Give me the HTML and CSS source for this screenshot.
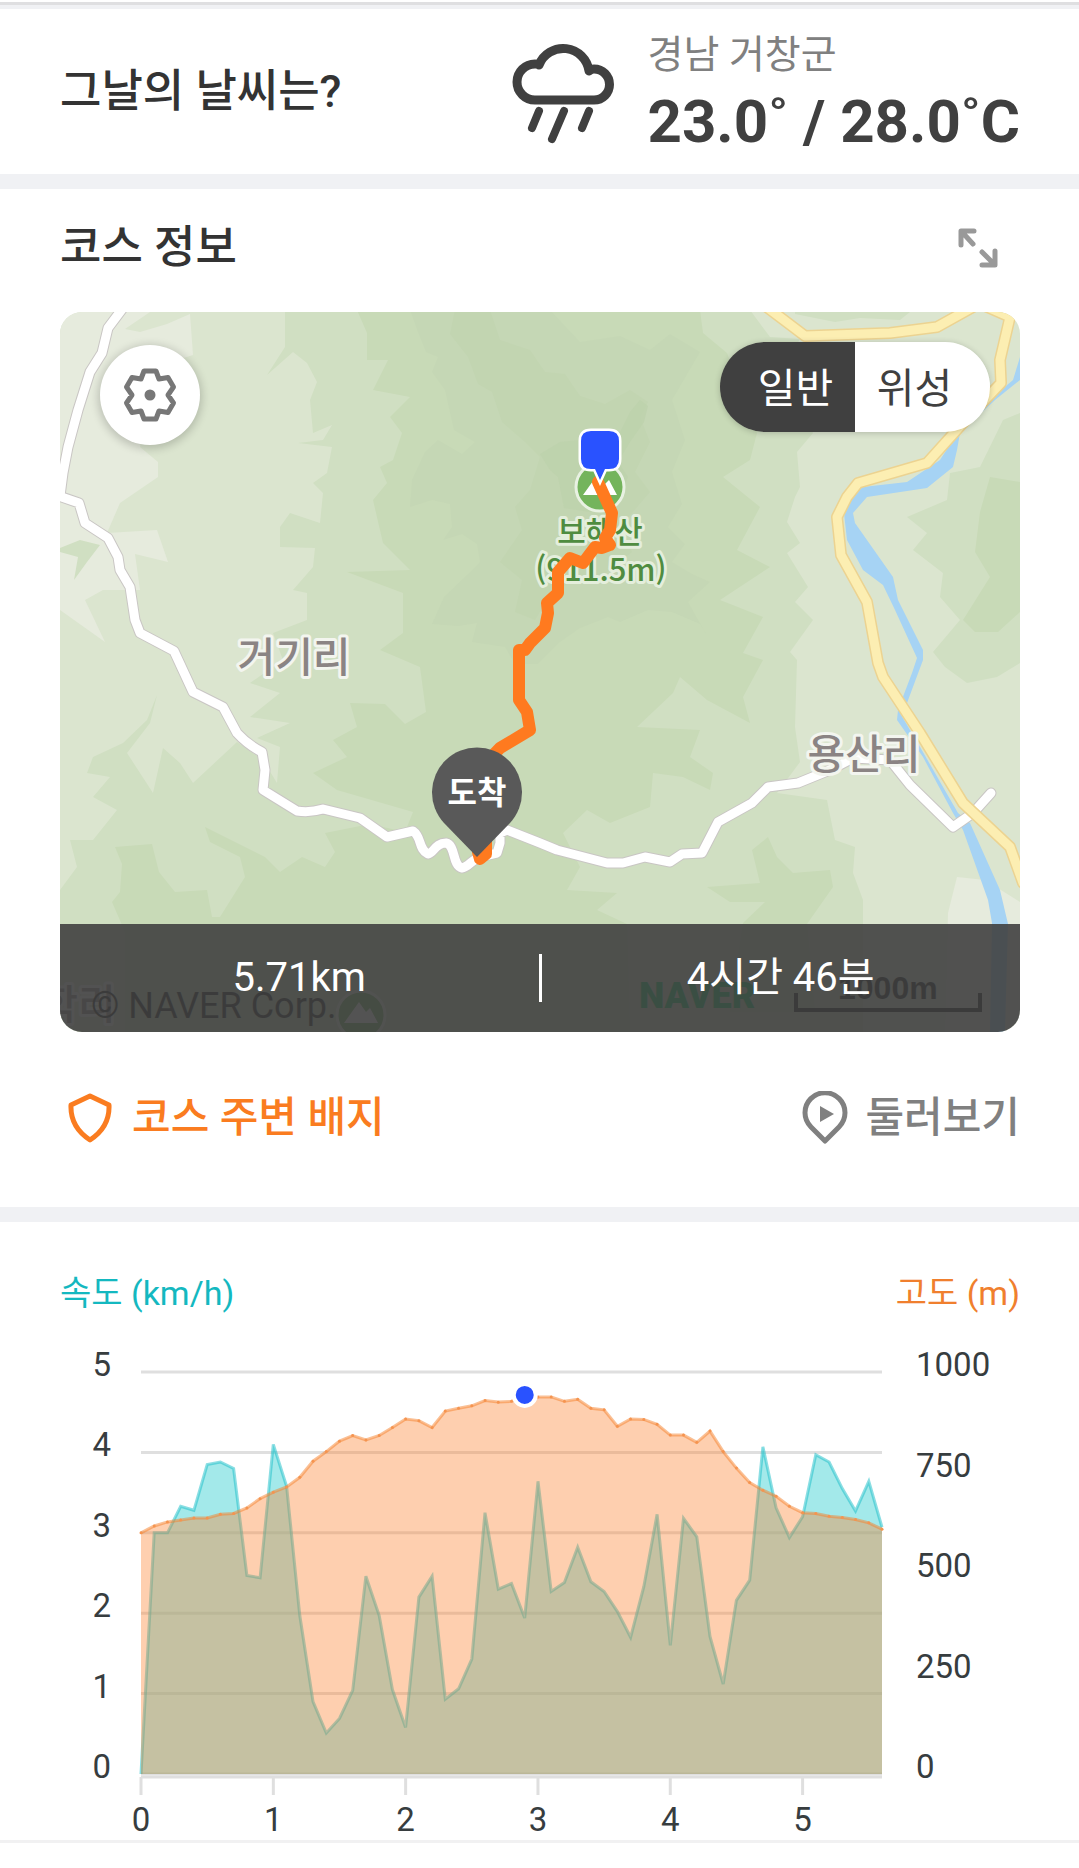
FILE: index.html
```html
<!DOCTYPE html>
<html lang="ko">
<head>
    <meta charset="UTF-8">
    <meta name="viewport" content="width=device-width, initial-scale=1">
    <title>코스 정보</title>
    <link rel="stylesheet" href="styles.css">
</head>
<body>
    <div class="top-line"></div>

    <section class="weather">
        <h2>그날의 날씨는?</h2>
        <svg class="weather-icon" viewBox="0 0 102 104" aria-hidden="true">
            <path class="cloud" d="M23 60 A18 18 0 0 1 23 24 Q26 24 27 25 A26 26 0 0 1 77 31 Q79 29 82 29 A15 15 0 0 1 82 60 Z"/>
            <path class="rain" d="M27 71 L20 88 M52 71 L40 99 M77 71 L70 88"/>
        </svg>
        <div class="weather-info">
            <p class="region">경남 거창군</p>
            <p class="temp">23.0˚ / 28.0˚C</p>
        </div>
    </section>

    <section class="course">
        <div class="course-header">
            <h2>코스 정보</h2>
            <button type="button" class="expand-btn" aria-label="지도 확대">
                <svg viewBox="0 0 40 40">
                    <path d="M3 17 V3 H16 M4 4 L15 16 M37 23 V37 H24 M36 36 L24 24"/>
                </svg>
            </button>
        </div>

        <div class="map">
            <svg class="map-canvas" viewBox="0 0 960 720">
                <!-- terrain -->
                <rect width="960" height="720" fill="#dbe5cf"/>
                <path fill="#e6ebdd" d="M0 0H90L65 17L80 20L107 12L130 2L133 43L95 55L80 135L98 150L98 165L60 191L47 221L97 218L108 250L75 242L80 278L43 278L25 288L45 330L0 298Z"/>
                <path fill="#e6ebdd" d="M897 565L925 568L960 590V720H885L888 601Z"/>
                <path fill="#d0dfc2" d="M225 -2V35L207 63L233 40L247 51L257 70L250 88L253 121L272 113L263 128L238 131L272 135L267 161L253 171L263 181L260 211L230 201L220 215V235L255 236L253 255L233 278L247 281V308L213 321L223 348L190 371L220 381L190 405L230 411L197 426L220 435L217 471L203 448L177 430L133 471L120 451L103 436L93 481L67 441L90 411L97 383L87 408L63 431L33 445L27 461L50 465L33 485L57 498L33 528L10 528L17 555L0 578V720H803V588L793 561L795 535L775 528L767 488L717 481L740 450L735 415L737 348L730 340L753 308L735 290L748 275L727 241L740 231L727 210L735 185L740 175L737 140L753 121L720 60L740 27L710 25L690 -2Z"/>
                <path fill="#d0dfc2" d="M960 101L943 108L920 155L890 161L887 188L847 205L867 221L853 238L883 261L880 285L900 308L873 340L885 355L907 371L937 365L960 351Z"/>
                <path fill="#d0dfc2" d="M735 2L775 10L800 6L840 8L850 0H735Z"/>
                <path fill="#d0dfc2" d="M0 236L20 228L40 233L27 250L14 268L18 245L0 240Z"/>
                <path fill="#c8dab7" d="M297 -2L307 21V48L328 48L313 78L350 85L330 105L342 121L333 148L320 155L327 171L313 188L323 231L350 258L287 260L343 281V321L320 338L360 355L366 400L345 412L325 392L290 391L297 415L273 428L287 445L253 461L277 478L353 500L345 520L310 512L265 521L275 540L265 555L242 545L220 560L205 545L175 530L145 515L150 530L180 545L185 565L160 605L152 605L147 578L115 580L99 560L92 532L55 535L62 552L60 580L52 590L65 620V720H570L567 612L537 598L557 581L507 578L520 555L503 521L527 498L550 511L590 495L593 461L623 465L650 478L653 461L630 445L640 418L577 415L613 381L620 365L647 388L690 411L683 385L703 348L683 341L703 305L660 288L710 255L677 238L700 195L663 165L690 148L697 121L667 41L643 21L640 -2Z"/>
                <path fill="#c8dab7" d="M960 170L930 165L920 200L915 240L930 265L903 308L915 320L938 320L960 300Z"/>
                <path fill="#c8dab7" d="M708 525L717 545L733 561L770 558L773 575L747 612L755 700H670L683 611L705 590L670 590L647 575L700 571L692 538Z"/>
                <path fill="#c5d7b5" d="M350 -2L358 20L366 40L378 45L372 60L385 78L394 118L415 130L402 142L378 128L365 140L352 168L350 195L372 188L390 192L392 215L383 228L402 222L417 232L420 250L408 262L384 285L372 312L398 314L417 311L412 330L445 335L455 352L478 352L500 330L520 316L548 305L560 310L588 298L612 300L640 312L646 322L628 290L650 270L632 262L612 250L625 232L608 215L622 192L612 160L625 128L612 88L640 40L610 22L590 38L560 24L520 30L490 -2Z"/>
                <path fill="#c2d5b1" d="M395 -2L390 22L408 45L418 72L432 80L442 110L465 130L480 145L470 178L455 195L462 218L440 250L462 268L455 300L475 308L492 280L512 270L545 262L572 240L560 215L590 180L575 160L590 130L580 105L588 90L570 78L545 92L520 84L505 62L485 60L470 38L440 28L430 -2Z"/>
                <path fill="#bcd1ab" opacity=".7" d="M480 142L500 130L520 128L560 120L570 100L580 88L588 94L584 110L570 130L558 150L568 165L555 195L530 200L504 196L498 165L490 158Z"/>

                <!-- river -->
                <path fill="#a6d3f4" d="M960 45V68L935 88L900 121L897 138L893 155L867 176L807 185L793 201L795 211L833 265L838 288L863 338L863 348L847 391L840 401L860 435L898 501L910 511L940 578L948 612L945 720H930L932 611L928 588L903 518L893 501L863 445L837 408L838 398L852 361L857 346L835 298L823 273L803 258L787 228L784 201L790 185L803 175L847 170L880 148L898 120L933 85L953 68Z"/>

                <!-- roads -->
                <g class="road">
                    <path id="roadNorth" d="M63 -4L48 16L42 41L30 60L18 98L8 135L3 161L0 184"/>
                    <path id="roadMain" d="M-4 183L19 191L25 211L48 226L58 245L60 258L70 275L75 308L80 321L114 339L133 380L163 395L177 421Q188 433 202 440L205 458L203 478L237 499Q250 501 263 497L300 506L327 525L353 519C362 525 358 537 368 542C374 541 375 531 386 531C396 533 392 554 402 556C409 555 411 548 420 545L437 541L440 531V521L447 518L480 531L497 538L547 551H563L585 545L610 550L622 542L642 541L658 510L692 491L708 475L738 471L770 458L793 446L830 448L850 473L893 515L913 501L931 481"/>
                </g>
                <g class="road-fill">
                    <use href="#roadNorth"/>
                    <use href="#roadMain"/>
                </g>
                <g class="highway">
                    <path id="hwTop" d="M708 -4L745 24L830 21L877 15L913 -5"/>
                    <path id="hwEast" d="M925 -6L950 5L940 48L941 71L903 111L867 151L798 171L787 185L777 205L781 243L807 290L818 351L823 365L860 421L903 491L950 535L963 571"/>
                </g>
                <g class="highway-fill">
                    <use href="#hwTop"/>
                    <use href="#hwEast"/>
                </g>

                <!-- place names -->
                <text class="place" x="234" y="360">거기리</text>
                <text class="place" x="804" y="457">용산리</text>
                <text class="place" x="18" y="707">학리</text>

                <g id="peak">
                    <circle cx="540" cy="175" r="24" fill="#74b45c" stroke="#e8f1e2" stroke-width="3"/>
                    <path fill="#fff" d="M523 183L538 162L545 172L549 168L557 183Z"/>
                </g>
                <use href="#peak" x="-239" y="528"/>
                <text class="peak-name" x="540" y="231">보해산</text>
                <text class="peak-name" x="541" y="269">(911.5m)</text>

                <text class="copyright" x="31" y="706">© NAVER Corp.</text>
                <text class="naver" x="579" y="696">NAVER</text>
                <text class="scale" x="778" y="687">1000m</text>
                <path d="M736 681V698H920V681" fill="none" stroke="#111" stroke-width="4"/>

                <!-- hiking route -->
                <path class="route" d="M538 170L552 201L550 218L545 226L550 233L542 236L535 235L523 251L510 246L498 260V281L487 291L488 301L485 316L470 331L465 338L459 338V388L467 400L470 418L440 436L417 460M426 525V542L420 547L418 540"/>

                <!-- current position -->
                <path class="position" d="M531 119H549Q559 119 559 129V147Q559 157 549 157H545L540 168L535 157H531Q521 157 521 147V129Q521 119 531 119Z"/>

                <!-- finish pin -->
                <path fill="#595959" d="M417 545L384 511A45 45 0 1 1 450 511Z"/>
                <text class="pin-text" x="417" y="492">도착</text>
            </svg>

            <button type="button" class="settings-btn" aria-label="지도 설정">
                <svg viewBox="-28 -28 56 56">
                    <path d="M-6 -24H6L9 -16L18 -17.5L23.5 -8L18 0L23.5 8L18 17.5L9 16L6 24H-6L-9 16L-18 17.5L-23.5 8L-18 0L-23.5 -8L-18 -17.5L-9 -16Z"/>
                    <circle r="5.5"/>
                </svg>
            </button>

            <div class="map-type">
                <button type="button" class="active">일반</button>
                <button type="button">위성</button>
            </div>

            <div class="summary">
                <span>5.71km</span>
                <span>4시간 46분</span>
            </div>
        </div>

        <div class="course-links">
            <a href="#badge" class="badge-link">
                <svg viewBox="0 0 44 52" aria-hidden="true">
                    <path d="M22 4L41 13Q42 35 22 48Q2 35 3 13Z"/>
                </svg>
                코스 주변 배지
            </a>
            <a href="#look" class="look-link">
                <svg viewBox="0 0 46 54" aria-hidden="true">
                    <path d="M23 50L9 36A20 20 0 1 1 37 36Z"/>
                    <path class="play" d="M18 15V31L32 23Z"/>
                </svg>
                둘러보기
            </a>
        </div>
    </section>

    <section class="chart">
        <div class="chart-header">
            <span class="speed-title">속도 (km/h)</span>
            <span class="altitude-title">고도 (m)</span>
        </div>
        <svg id="chart" viewBox="0 0 960 499">
            <g id="grid"></g>
            <g id="areas"></g>
            <g id="labels"></g>
        </svg>
    </section>

    <script>
        // one value for every 0.1km
        const speed = [0, 3, 3, 3.33, 3.28, 3.85, 3.88, 3.8, 2.47, 2.44, 4.1, 3.58, 1.97, 0.9, 0.51, 0.69, 1.04, 2.46, 1.97, 1.05,
            0.58, 2.2, 2.46, 0.93, 1.06, 1.43, 3.25, 2.3, 2.37, 1.94, 3.64, 2.27, 2.38, 2.82, 2.39, 2.27, 2.02, 1.7, 2.33, 3.23,
            1.6, 3.18, 2.95, 1.71, 1.12, 2.16, 2.41, 4.07, 3.31, 2.94, 3.2, 3.97, 3.88, 3.55, 3.27, 3.64, 3.07];
        const altitude = [600, 617, 627, 632, 637, 637, 646, 648, 662, 685, 701, 714, 738, 778, 802, 828, 842, 831, 842, 862,
            883, 879, 862, 903, 910, 916, 929, 925, 927, 943, 938, 938, 927, 932, 910, 906, 865, 883, 882, 870,
            843, 843, 825, 853, 802, 761, 725, 706, 691, 666, 650, 648, 641, 638, 633, 625, 609];

        const left = 81, right = 822, top0 = 31, bottom = 433;
        const px = i => left + (right - left) * i / (speed.length - 1);
        const py = (v, max) => bottom - (bottom - top0) * v / max;

        let grid = '';
        let labels = '';
        for (let v = 0; v <= 5; v++) {
            const y = py(v, 5);
            const x = px(v * 10);
            grid += `<path d="M${left} ${y}H${right}"/>`;
            grid += `<path d="M${x} 436V454"/>`;
            labels += `<text class="left" x="51" y="${y + 4}">${v}</text>`;
            labels += `<text class="bottom" x="${x}" y="490">${v}</text>`;
        }
        grid += `<path d="M${left} 436H${right}"/>`;
        for (let v = 0; v <= 1000; v += 250) {
            labels += `<text x="856" y="${py(v, 1000) + 4}">${v}</text>`;
        }

        function area(name, data, max) {
            const points = data.map((v, i) => px(i).toFixed(1) + ',' + py(v, max).toFixed(1)).join(' ');
            return `<polygon class="${name}-area" points="${left},${bottom} ${points} ${right},${bottom}"/>` +
                `<polyline class="${name}-line" points="${points}"/>`;
        }

        let areas = area('speed', speed, 5) + area('altitude', altitude, 1000);
        altitude.forEach((v, i) => {
            areas += `<circle class="dot" cx="${px(i)}" cy="${py(v, 1000)}" r="1.5"/>`;
        });
        areas += `<circle class="marker" cx="${px(29)}" cy="${py(943, 1000)}" r="11"/>`;

        document.getElementById('grid').innerHTML = grid;
        document.getElementById('areas').innerHTML = areas;
        document.getElementById('labels').innerHTML = labels;
    </script>
</body>
</html>
```

FILE: styles.css
```css
* {
    margin: 0;
    padding: 0;
    box-sizing: border-box;
}

body {
    background: #fff;
    color: #333;
    font-family: Roboto, "Noto Sans CJK KR", sans-serif;
    padding-top: 2px;
}

h2 {
    font-size: 45px;
    line-height: 60px;
    font-weight: 500;
}

button {
    border: none;
    background: none;
    font-family: inherit;
    cursor: pointer;
}

a {
    text-decoration: none;
}

svg {
    display: block;
}

.top-line {
    height: 7px;
    background: #f0f1f4;
    border-top: 3px solid #dfdfe1;
}

/* weather */
.weather {
    display: flex;
    align-items: center;
    height: 165px;
    padding: 0 59px 0 60px;
}

.weather-icon {
    width: 102px;
    height: 104px;
    margin-left: auto;
    margin-right: 34px;
    fill: none;
    stroke: #404040;
    stroke-linejoin: round;
    stroke-linecap: round;
}

.cloud {
    stroke-width: 9;
}

.rain {
    stroke-width: 8;
}

.region {
    font-size: 39px;
    line-height: 60px;
    color: #808080;
}

.temp {
    font-size: 60px;
    line-height: 74px;
    font-weight: 700;
    color: #404040;
}

/* course */
.course {
    padding: 0 59px 0 60px;
    border-top: 15px solid #f0f1f4;
}

.course-header {
    display: flex;
    justify-content: space-between;
    align-items: center;
    height: 123px;
    padding-right: 22px;
    padding-bottom: 6px;
}

.expand-btn,
.expand-btn svg {
    width: 40px;
    height: 40px;
}

.expand-btn svg {
    fill: none;
    stroke: #999;
    stroke-width: 5;
    stroke-linecap: round;
    stroke-linejoin: round;
}

.map {
    position: relative;
    border-radius: 22px;
    overflow: hidden;
}

.map-canvas {
    width: 100%;
    height: auto;
}

.road, .road-fill, .highway, .highway-fill, .route {
    fill: none;
    stroke-linecap: round;
    stroke-linejoin: round;
}

.road {
    stroke: #c9c6c4;
    stroke-width: 11;
}

.road-fill {
    stroke: #fff;
    stroke-width: 9;
}

.highway {
    stroke: #ecd391;
    stroke-width: 12;
}

.highway-fill {
    stroke: #fceeb2;
    stroke-width: 9;
}

.route {
    stroke: #ff7a1f;
    stroke-width: 12;
}

.position {
    fill: #2952ff;
    stroke: #fff;
    stroke-width: 5;
    paint-order: stroke;
}

.place, .peak-name {
    font-family: "Noto Sans CJK KR", sans-serif;
    font-weight: 500;
    text-anchor: middle;
    paint-order: stroke;
    stroke-width: 6;
    stroke-linejoin: round;
}

.place {
    font-size: 41px;
    fill: #8b8484;
    stroke: #f3f5ef;
}

.peak-name {
    font-size: 31px;
    fill: #4f8c40;
    stroke: #e4eedc;
}

.copyright {
    font-size: 36px;
    fill: #111;
}

.naver {
    font-size: 36px;
    font-weight: 900;
    fill: #03c75a;
}

.scale {
    font-family: "Liberation Sans", sans-serif;
    font-size: 32px;
    font-weight: 700;
    fill: #111;
}

.pin-text {
    font-size: 32px;
    font-weight: 700;
    fill: #fff;
    text-anchor: middle;
}

.settings-btn {
    position: absolute;
    top: 33px;
    left: 40px;
    display: flex;
    align-items: center;
    justify-content: center;
    width: 100px;
    height: 100px;
    border-radius: 50%;
    background: #fff;
    box-shadow: 0 2px 8px 2px rgba(0, 0, 0, 0.18);
}

.settings-btn svg {
    width: 56px;
    height: 56px;
}

.settings-btn path {
    fill: none;
    stroke: #777;
    stroke-width: 5;
    stroke-linejoin: round;
}

.settings-btn circle {
    fill: #777;
}

.map-type {
    position: absolute;
    top: 30px;
    right: 30px;
    display: flex;
    border-radius: 45px;
    overflow: hidden;
    box-shadow: 0 1px 6px rgba(0, 0, 0, 0.2);
}

.map-type button {
    width: 135px;
    height: 90px;
    padding-right: 16px;
    padding-bottom: 4px;
    font-size: 41px;
    background: #fff;
    color: #404040;
}

.map-type .active {
    padding-right: 0;
    padding-left: 16px;
    background: #404040;
    color: #fff;
}

.summary {
    position: absolute;
    left: 0;
    right: 0;
    bottom: 0;
    display: flex;
    align-items: center;
    height: 108px;
    background: rgba(64, 64, 64, 0.9);
    color: #fff;
    font-size: 40px;
    line-height: 48px;
    text-align: center;
}

.summary span {
    flex: 1;
}

.summary span + span {
    border-left: 3px solid #fff;
}

.course-links {
    display: flex;
    justify-content: space-between;
    align-items: center;
    height: 175px;
    padding-bottom: 4px;
}

.course-links a {
    display: flex;
    align-items: center;
    font-size: 42px;
    font-weight: 500;
    line-height: 60px;
}

.course-links svg {
    fill: none;
    stroke: currentColor;
    stroke-width: 5;
    stroke-linejoin: round;
}

.badge-link {
    gap: 20px;
    padding-left: 8px;
    color: #fa7c20;
}

.badge-link svg {
    width: 44px;
    height: 52px;
}

.look-link {
    gap: 17px;
    color: #808080;
}

.look-link svg {
    width: 46px;
    height: 54px;
}

.look-link .play {
    fill: currentColor;
    stroke: none;
}

/* chart */
.chart {
    padding: 46px 59px 0 60px;
    border-top: 15px solid #f0f1f4;
    border-bottom: 3px solid #f1f1f2;
}

.chart-header {
    display: flex;
    justify-content: space-between;
    margin-bottom: 23px;
    font-size: 34px;
    line-height: 50px;
}

.speed-title {
    color: #14b8c0;
}

.altitude-title {
    color: #f07f2e;
}

#chart {
    width: 100%;
    height: auto;
    overflow: visible;
}

#grid {
    stroke: #dfdfdf;
    stroke-width: 3;
}

#labels {
    font-size: 33px;
    fill: #373d3f;
}

#labels .left {
    text-anchor: end;
}

#labels .bottom {
    text-anchor: middle;
}

.speed-area {
    fill: #48d3d6;
    fill-opacity: 0.5;
}

.speed-line {
    fill: none;
    stroke: #17bec8;
    stroke-opacity: 0.5;
    stroke-width: 3;
}

.altitude-area {
    fill: #fc812c;
    fill-opacity: 0.38;
}

.altitude-line {
    fill: none;
    stroke: #f5812c;
    stroke-opacity: 0.5;
    stroke-width: 3;
}

.dot {
    fill: #f59450;
}

.marker {
    fill: #2952ff;
    stroke: #fff;
    stroke-width: 4;
}
```
